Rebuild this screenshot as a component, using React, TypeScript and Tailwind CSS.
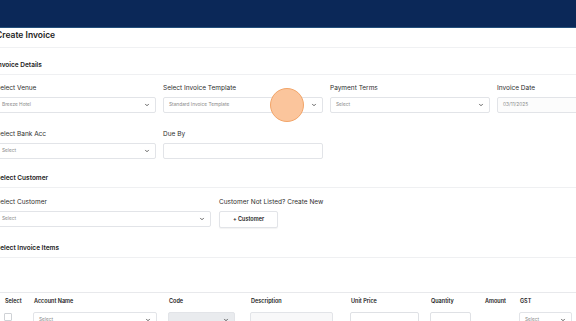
import React from "react";

const Chevron = () => (
  <svg width="6" height="6" viewBox="0 0 24 24" fill="none" stroke="#333" strokeWidth="3" strokeLinecap="round" strokeLinejoin="round">
    <path d="m6 9 6 6 6-6" />
  </svg>
);

const SelectBox = ({ text, className = "" }: { text?: string; className?: string }) => (
  <div className={`flex h-[16px] items-center justify-between rounded-[2px] border border-[#e2e4e8] bg-white pl-[5px] pr-[5px] ${className}`}>
    <span className="text-[4.8px] text-[#8a8a8a]">{text}</span>
    <Chevron />
  </div>
);

const Field = ({ label, children }: { label: string; children: React.ReactNode }) => (
  <div className="flex flex-col gap-[4px]">
    <label className="h-[10px] text-[6.5px] leading-[10px] text-[#2e2e2e]">{label}</label>
    {children}
  </div>
);

const SectionTitle = ({ title, className = "" }: { title: string; className?: string }) => (
  <div className={`border-b border-[#eff0f2] pb-[4px] ${className}`}>
    <h2 className="text-[6.5px] font-semibold leading-[10px] text-[#222]">{title}</h2>
  </div>
);

const columns = [
  { name: "Select", w: "w-[29px]" },
  { name: "Account Name", w: "w-[135px]" },
  { name: "Code", w: "w-[82px]" },
  { name: "Description", w: "w-[100px]" },
  { name: "Unit Price", w: "w-[80px]" },
  { name: "Quantity", w: "w-[54px]" },
  { name: "Amount", w: "w-[35px]" },
  { name: "GST", w: "w-[57px]" },
];

export default function App() {
  return (
    <div className="relative h-[321px] w-[576px] overflow-hidden bg-white font-['Inter','Liberation_Sans',sans-serif] text-[#2b2b2b]">
      <div className="h-[28px] border-b border-[#24507c] bg-[#0b2858]" />

      <div className="-ml-[4px]">
        <div className="h-[20px] border-b border-[#f0f1f3] pt-[2px]">
          <h1 className="text-[8.5px] font-semibold leading-[10px] text-[#222]">Create Invoice</h1>
        </div>

        <SectionTitle title="Invoice Details" className="pt-[12px]" />

        <div className="mt-[8px] grid grid-cols-[160px_160px_160px_160px] gap-x-[7px] gap-y-[16px]">
          <Field label="Select Venue">
            <SelectBox text="Breeze Hotel" />
          </Field>
          <Field label="Select Invoice Template">
            <SelectBox text="Standard Invoice Template" />
          </Field>
          <Field label="Payment Terms">
            <SelectBox text="Select" />
          </Field>
          <Field label="Invoice Date">
            <div className="flex h-[16px] items-center rounded-[2px] border border-[#e2e4e8] bg-[#fcfcfc] pl-[5px]">
              <span className="text-[4.8px] text-[#8a8a8a]">03/11/2025</span>
            </div>
          </Field>
          <Field label="Select Bank Acc">
            <SelectBox text="Select" />
          </Field>
          <Field label="Due By">
            <div className="h-[16px] rounded-[2px] border border-[#e2e4e8] bg-white" />
          </Field>
        </div>

        <SectionTitle title="Select Customer" className="pt-[14px]" />

        <div className="mt-[9px] flex gap-[8px]">
          <div className="w-[215px]">
            <Field label="Select Customer">
              <SelectBox text="Select" />
            </Field>
          </div>
          <Field label="Customer Not Listed? Create New">
            <button className="flex h-[17px] w-[59px] items-center justify-center rounded-[2px] border border-[#e2e4e8] bg-white text-[5.5px] font-semibold text-[#222] shadow-[0_1px_1px_rgba(0,0,0,0.05)]">
              + Customer
            </button>
          </Field>
        </div>

        <SectionTitle title="Select Invoice Items" className="pt-[15px]" />
      </div>

      <div className="mt-[34px] border-t border-[#e8e9ec]">
        <div className="flex h-[16px] items-center pl-[5px]">
          {columns.map((c) => (
            <div key={c.name} className={`${c.w} shrink-0 text-[5.5px] font-semibold text-[#222]`}>
              {c.name}
            </div>
          ))}
        </div>
        <div className="mt-[3px] flex items-start pl-[4px]">
          <div className="w-[29px] shrink-0 pt-[1px]">
            <div className="h-[8px] w-[8px] rounded-[1px] border border-[#cfd2d6] bg-white" />
          </div>
          <div className="w-[135px] shrink-0">
            <SelectBox text="Select" className="w-[124px]" />
          </div>
          <div className="w-[82px] shrink-0">
            <div className="flex h-[16px] w-[67px] items-center justify-end rounded-[2px] border border-[#e2e4e8] bg-[#e9ebee] pr-[5px]">
              <Chevron />
            </div>
          </div>
          <div className="w-[100px] shrink-0">
            <div className="h-[16px] w-[83px] rounded-[2px] border border-[#e2e4e8] bg-[#f8f8f9]" />
          </div>
          <div className="w-[80px] shrink-0">
            <div className="h-[16px] w-[69px] rounded-[2px] border border-[#dfe1e5] bg-white" />
          </div>
          <div className="w-[89px] shrink-0">
            <div className="h-[16px] w-[41px] rounded-[2px] border border-[#dfe1e5] bg-white" />
          </div>
          <div className="w-[57px] shrink-0">
            <SelectBox text="Select" className="w-[53px]" />
          </div>
        </div>
      </div>

      <div className="absolute left-[270px] top-[88px] h-[34px] w-[34px] rounded-full border border-[#f2a569] bg-[#fbc59c]" />
    </div>
  );
}
